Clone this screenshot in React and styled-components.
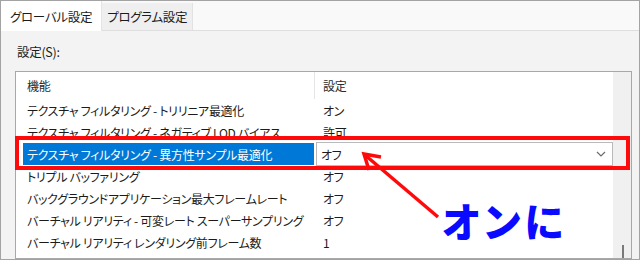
import React from "react";
import styled, { createGlobalStyle } from "styled-components";

const GlobalStyle = createGlobalStyle`
  html, body {
    margin: 0;
    padding: 0;
    background: #ffffff;
  }
  * {
    box-sizing: border-box;
  }
`;

const Frame = styled.div`
  position: relative;
  width: 640px;
  height: 260px;
  overflow: hidden;
  border: 1px solid #a3a3a3;
  background: #f3f3f3;
  font-family: "Noto Sans CJK JP", "Noto Sans", sans-serif;
  font-feature-settings: "palt";
  font-size: 12px;
  letter-spacing: -0.3px;
  color: #1b1b1b;
  display: flex;
  flex-direction: column;
`;

const TabBar = styled.div`
  display: flex;
  align-items: flex-end;
  height: 30px;
  background: #f9f9f9;
  border-bottom: 1px solid #dedede;
  flex-shrink: 0;
`;

const Tab = styled.div`
  height: ${(p) => (p.active ? "30px" : "27px")};
  padding: 0 ${(p) => (p.active ? "9px" : "5px")};
  display: flex;
  align-items: center;
  font-size: 12.5px;
  background: ${(p) => (p.active ? "#ffffff" : "#efefef")};
  border-right: 1px solid ${(p) => (p.active ? "#e4e4e4" : "#e2e2e2")};
  margin-bottom: ${(p) => (p.active ? "-1px" : "0")};
  white-space: nowrap;
`;

const Panel = styled.div`
  flex: 1;
  padding: 12px 7px 0 14px;
  display: flex;
  flex-direction: column;
  min-height: 0;
`;

const FieldLabel = styled.div`
  line-height: 18px;
  padding-left: 2px;
  font-size: 12.5px;
`;

const ListBox = styled.div`
  margin-top: 10px;
  flex: 1;
  display: flex;
  background: #ffffff;
  border: 1px solid #a8a8a8;
  min-height: 0;
`;

const ListBody = styled.div`
  flex: 1;
  display: flex;
  flex-direction: column;
`;

const Columns = styled.div`
  display: grid;
  grid-template-columns: 299px 1fr;
  height: ${(p) => (p.header ? "27px" : "22px")};
  flex-shrink: 0;
  align-items: stretch;
`;

const HeaderCell = styled.div`
  display: flex;
  align-items: center;
  padding-left: ${(p) => (p.first ? "11px" : "8px")};
  border-right: ${(p) => (p.first ? "1px solid #e5e5e5" : "none")};
  color: #2b2b2b;
`;

const NameCell = styled.div`
  display: flex;
  align-items: center;
  margin: 0 1px 0 7px;
  padding-left: 4px;
  white-space: nowrap;
  overflow: hidden;
  background: ${(p) => (p.selected ? "#0078d7" : "transparent")};
  color: ${(p) => (p.selected ? "#ffffff" : "inherit")};
`;

const ValueCell = styled.div`
  display: flex;
  align-items: center;
  padding-left: 8px;
  white-space: nowrap;
`;

const Dropdown = styled.div`
  display: flex;
  align-items: center;
  justify-content: space-between;
  margin: -1px 0 -1px 1px;
  padding: 0 6px 0 4px;
  background: #ffffff;
  border: 1px solid #b9b9b9;
`;

const Scrollbar = styled.div`
  width: 18px;
  background: #f0f0f0;
  display: flex;
  justify-content: center;
  align-items: flex-end;
`;

const Thumb = styled.div`
  width: 2px;
  height: 13px;
  background: #7a7a7a;
  margin-left: 1px;
`;

const Highlight = styled.div`
  position: absolute;
  left: 14px;
  top: 135px;
  width: 615px;
  height: 34px;
  border: 4px solid #ff0a0a;
  pointer-events: none;
`;

const Arrow = styled.svg`
  position: absolute;
  left: 350px;
  top: 140px;
  pointer-events: none;
`;

const Callout = styled.div`
  position: absolute;
  left: 441px;
  top: 194px;
  font-size: 40px;
  line-height: 50px;
  font-weight: 900;
  letter-spacing: 4px;
  color: #0a0aff;
`;

const rows = [
  { name: "テクスチャ フィルタリング - トリリニア最適化", value: "オン" },
  { name: "テクスチャ フィルタリング - ネガティブ LOD バイアス", value: "許可" },
  {
    name: "テクスチャ フィルタリング - 異方性サンプル最適化",
    value: "オフ",
    selected: true,
  },
  { name: "トリプル バッファリング", value: "オフ" },
  { name: "バックグラウンドアプリケーション最大フレームレート", value: "オフ" },
  { name: "バーチャル リアリティ - 可変レート スーパーサンプリング", value: "オフ" },
  { name: "バーチャル リアリティ レンダリング前フレーム数", value: "1" },
  { name: "マルチフレーム サンプル AA (MFAA)", value: "オフ" },
];

const Chevron = () => (
  <svg width="10" height="6" viewBox="0 0 10 6">
    <polyline
      points="1,1 5,5 9,1"
      fill="none"
      stroke="#6b6b6b"
      strokeWidth="1.2"
    />
  </svg>
);

const App = () => (
  <>
    <GlobalStyle />
    <Frame>
      <TabBar>
        <Tab active>グローバル設定</Tab>
        <Tab>プログラム設定</Tab>
      </TabBar>
      <Panel>
        <FieldLabel>設定(S):</FieldLabel>
        <ListBox>
          <ListBody>
            <Columns header>
              <HeaderCell first>機能</HeaderCell>
              <HeaderCell>設定</HeaderCell>
            </Columns>
            {rows.map((row) => (
              <Columns key={row.name}>
                <NameCell selected={row.selected}>{row.name}</NameCell>
                {row.selected ? (
                  <Dropdown>
                    <span>{row.value}</span>
                    <Chevron />
                  </Dropdown>
                ) : (
                  <ValueCell>{row.value}</ValueCell>
                )}
              </Columns>
            ))}
          </ListBody>
          <Scrollbar>
            <Thumb />
          </Scrollbar>
        </ListBox>
      </Panel>

      <Highlight />
      <Arrow width="100" height="90" viewBox="350 140 100 90">
        <line
          x1="437"
          y1="216"
          x2="364"
          y2="154"
          stroke="#ff0a0a"
          strokeWidth="3.5"
        />
        <polyline
          points="380,156 363,153 368,169"
          fill="none"
          stroke="#ff0a0a"
          strokeWidth="3.5"
        />
      </Arrow>
      <Callout>オンに</Callout>
    </Frame>
  </>
);

export default App;
